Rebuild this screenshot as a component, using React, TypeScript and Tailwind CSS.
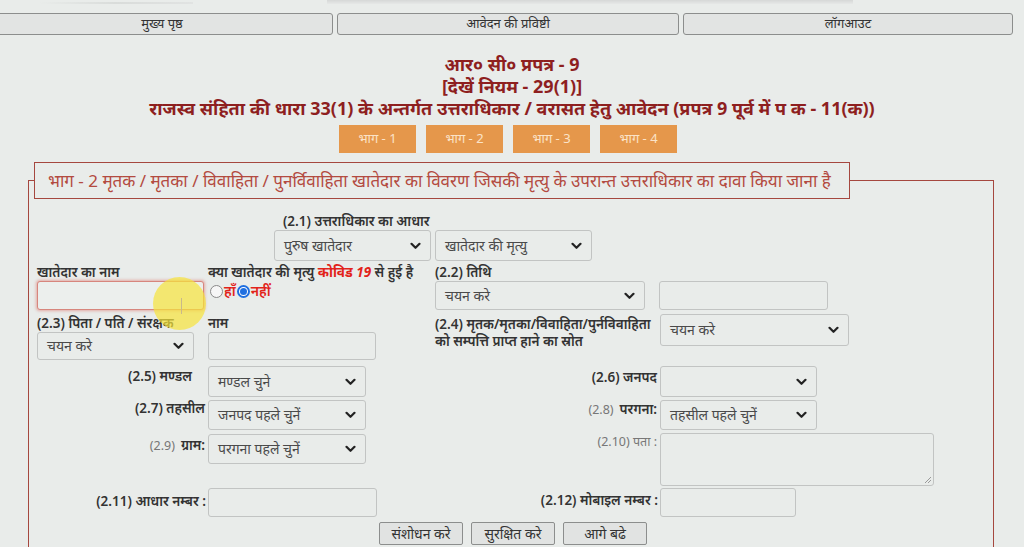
import React from "react";

const Chevron = () => (
  <svg width="11" height="8" viewBox="0 0 11 8" className="shrink-0">
    <path d="M1.5 1.8 L5.5 5.8 L9.5 1.8" fill="none" stroke="#222" strokeWidth="2.2" strokeLinecap="round" strokeLinejoin="round" />
  </svg>
);

function Select({ cls, text }: { cls: string; text?: string }) {
  return (
    <div
      className={
        "flex items-center justify-between rounded-[3px] border border-[#c2c4c3] bg-[#e9ecea] pl-[9px] pr-[9px] text-[14px] text-[#4a4a4a] " +
        cls
      }
    >
      <span className="leading-none">{text}</span>
      <Chevron />
    </div>
  );
}

function Input({ cls }: { cls: string }) {
  return <div className={"rounded-[3px] border border-[#c2c4c3] bg-[#e9ecea] " + cls} />;
}

function NavBtn({ cls, text }: { cls: string; text: string }) {
  return (
    <div
      className={
        "flex h-[22px] items-center justify-center rounded-[3px] border border-[#8c8e8d] bg-[#e2e4e3] text-[13px] text-[#333] " +
        cls
      }
    >
      {text}
    </div>
  );
}

function ActBtn({ text }: { text: string }) {
  return (
    <div className="flex h-[23px] w-[84px] items-center justify-center rounded-[2px] border border-[#8c8e8d] bg-[#e1e3e2] text-[14px] text-[#333]">
      {text}
    </div>
  );
}

const Tab = ({ text }: { text: string }) => (
  <div className="flex h-[28px] w-[77px] items-center justify-center bg-[#e5974b] text-[13px] text-[#fbe3c8]">
    {text}
  </div>
);

export default function App() {
  return (
    <div className="relative h-[547px] w-[1024px] overflow-hidden bg-[#e9ecea] font-['Noto_Sans','Noto_Sans_Devanagari','Lohit_Devanagari','FreeSans','Liberation_Sans',sans-serif] text-[#333]">
      {/* faint top strip */}
      <div className="flex h-[13px] items-start">
        <div className="ml-[39px] mt-[2px] h-[2px] w-[154px] bg-gradient-to-r from-[#e9ecea] via-[#d9dcda] to-[#e1e3e2]" />
        <div className="ml-[134px] h-[4px] w-[526px] bg-gradient-to-b from-[#d6d8d7] to-[#e6e8e7]" />
      </div>

      {/* nav */}
      <div className="ml-[-9px] flex gap-[4px]">
        <NavBtn cls="w-[342px]" text="मुख्य पृष्ठ" />
        <NavBtn cls="w-[342px]" text="आवेदन की प्रविष्टी" />
        <NavBtn cls="w-[330px]" text="लॉगआउट" />
      </div>

      {/* titles */}
      <div className="mt-[18px] text-center text-[18px] font-bold leading-[22px] text-[#8e1f1f]">
        <div>आर० सी० प्रपत्र - 9</div>
        <div>[देखें नियम - 29(1)]</div>
        <div>
          राजस्व संहिता की धारा 33(1) के अन्तर्गत उत्तराधिकार / वरासत हेतु आवेदन (प्रपत्र 9 पूर्व में प क - 11(क))
        </div>
      </div>

      {/* tabs */}
      <div className="ml-[339px] mt-[6px] flex gap-[10px]">
        <Tab text="भाग - 1" />
        <Tab text="भाग - 2" />
        <Tab text="भाग - 3" />
        <Tab text="भाग - 4" />
      </div>

      {/* fieldset */}
      <fieldset className="ml-[28px] mt-[9px] h-[420px] w-[966px] border border-[#a5473f]">
        <legend className="ml-[5px] border border-[#a5473f] pl-[13px] pr-[18px] py-[7px] text-[17px] leading-[21px] text-[#b34a40]">
          भाग - 2 मृतक / मृतका / विवाहिता / पुनर्विवाहिता खातेदार का विवरण जिसकी मृत्यु के उपरान्त उत्तराधिकार का दावा किया जाना है
        </legend>

        <div className="pl-[8px] text-[13.5px] leading-[16px]">
          {/* row 1 */}
          <div className="ml-[237px] mt-[14px]">
            <div className="ml-[9px] font-semibold">(2.1) उत्तराधिकार का आधार</div>
            <div className="mt-[1px] flex gap-[4px]">
              <Select cls="h-[31px] w-[157px]" text="पुरुष खातेदार" />
              <Select cls="h-[31px] w-[157px]" text="खातेदार की मृत्यु" />
            </div>
          </div>

          {/* row 2 */}
          <div className="mt-[3px] grid grid-cols-[171px_227px_225px_1fr]">
            <div>
              <div className="font-semibold">खातेदार का नाम</div>
              <div className="mt-[1px] h-[29px] w-[167px] rounded-[3px] border border-[#d7867d] bg-[#ecefed] shadow-[0_0_3px_1px_rgba(220,90,80,0.45)]" />
            </div>
            <div>
              <div className="whitespace-nowrap font-semibold">
                क्या खातेदार की मृत्यु <span className="font-bold italic text-[#e2231a]">कोविड 19</span> से हुई है
              </div>
              <div className="mt-[4px] flex items-center text-[14px] font-semibold leading-[14px] text-[#e2231a]">
                <div className="ml-[2px] h-[13px] w-[13px] rounded-full border border-[#8a8a8a] bg-[#f6f6f6]" />
                <span className="ml-[1px]">हाँ</span>
                <div className="ml-[1px] flex h-[13px] w-[13px] items-center justify-center rounded-full border-[2px] border-[#1f6fe0] bg-white">
                  <div className="h-[7px] w-[7px] rounded-full bg-[#1f6fe0]" />
                </div>
                <span className="ml-[1px]">नहीं</span>
              </div>
            </div>
            <div>
              <div className="font-semibold">(2.2) तिथि</div>
              <Select cls="mt-[1px] h-[29px] w-[210px]" text="चयन करे" />
            </div>
            <div>
              <Input cls="ml-[-1px] mt-[17px] h-[29px] w-[169px]" />
            </div>
          </div>

          {/* row 3 */}
          <div className="mt-[4px] grid grid-cols-[171px_227px_225px_1fr]">
            <div className="pt-[1px]">
              <div className="whitespace-nowrap font-semibold">(2.3) पिता / पति / संरक्षक</div>
              <Select cls="mt-[1px] h-[28px] w-[157px]" text="चयन करे" />
            </div>
            <div className="pt-[1px]">
              <div className="font-semibold">नाम</div>
              <Input cls="mt-[1px] h-[28px] w-[168px]" />
            </div>
            <div className="pt-[2px] text-[13.5px] font-semibold leading-[16px]">
              <div className="whitespace-nowrap">(2.4) मृतक/मृतका/विवाहिता/पुर्नविवाहिता</div>
              <div className="mt-[1px]">को सम्पत्ति प्राप्त हाने का स्रोत</div>
            </div>
            <div>
              <Select cls="h-[32px] w-[189px]" text="चयन करे" />
            </div>
          </div>

          {/* row 4 */}
          <div className="mt-[6px] grid grid-cols-[171px_227px_225px_1fr]">
            <div className="pr-[16px] pt-[2px] text-right font-semibold">(2.5) मण्डल</div>
            <Select cls="h-[31px] w-[158px]" text="मण्डल चुने" />
            <div className="pr-[3px] pt-[3px] text-right font-semibold">(2.6) जनपद</div>
            <Select cls="h-[31px] w-[157px]" text="" />
          </div>

          {/* row 5 */}
          <div className="mt-[3px] grid grid-cols-[171px_227px_225px_1fr]">
            <div className="pr-[3px] pt-[0px] text-right font-semibold">(2.7) तहसील</div>
            <Select cls="h-[30px] w-[158px]" text="जनपद पहले चुनें" />
            <div className="pr-[3px] pt-[1px] text-right">
              <span className="text-[12.5px] text-[#777]">(2.8)</span>
              <span className="ml-[6px] font-semibold">परगना:</span>
            </div>
            <Select cls="h-[30px] w-[157px]" text="तहसील पहले चुनें" />
          </div>

          {/* row 6 */}
          <div className="mt-[3px] grid grid-cols-[171px_227px_225px_1fr]">
            <div className="pr-[3px] pt-[4px] text-right">
              <span className="text-[12.5px] text-[#777]">(2.9)</span>
              <span className="ml-[6px] font-semibold">ग्राम:</span>
            </div>
            <Select cls="mt-[1px] h-[30px] w-[158px]" text="परगना पहले चुनें" />
            <div className="pr-[3px] pt-[1px] text-right text-[12.5px] text-[#777]">(2.10) पता :</div>
            <div className="relative h-[53px] w-[274px] rounded-[3px] border border-[#c2c4c3] bg-[#e9ecea]">
              <svg width="8" height="8" viewBox="0 0 8 8" className="absolute bottom-[1px] right-[1px]">
                <path d="M7 1 L1 7 M7 4 L4 7" stroke="#9a9a9a" strokeWidth="1" />
              </svg>
            </div>
          </div>

          {/* row 7 */}
          <div className="mt-[2px] grid grid-cols-[171px_227px_225px_1fr]">
            <div className="pr-[2px] pt-[5px] text-right font-semibold">(2.11) आधार नम्बर :</div>
            <Input cls="h-[29px] w-[169px]" />
            <div className="pr-[2px] pt-[4px] text-right font-semibold">(2.12) मोबाइल नम्बर :</div>
            <Input cls="h-[29px] w-[136px]" />
          </div>

          {/* buttons */}
          <div className="ml-[342px] mt-[5px] flex gap-[8px]">
            <ActBtn text="संशोधन करे" />
            <ActBtn text="सुरक्षित करे" />
            <ActBtn text="आगे बढे" />
          </div>
        </div>
      </fieldset>

      {/* cursor highlight overlay */}
      <div className="pointer-events-none absolute left-[153px] top-[277px] h-[53px] w-[53px] rounded-full bg-[#f6e43a]/70" />
      <div className="pointer-events-none absolute left-[181px] top-[298px] h-[16px] w-[1px] bg-[#c9b98a]" />
    </div>
  );
}
